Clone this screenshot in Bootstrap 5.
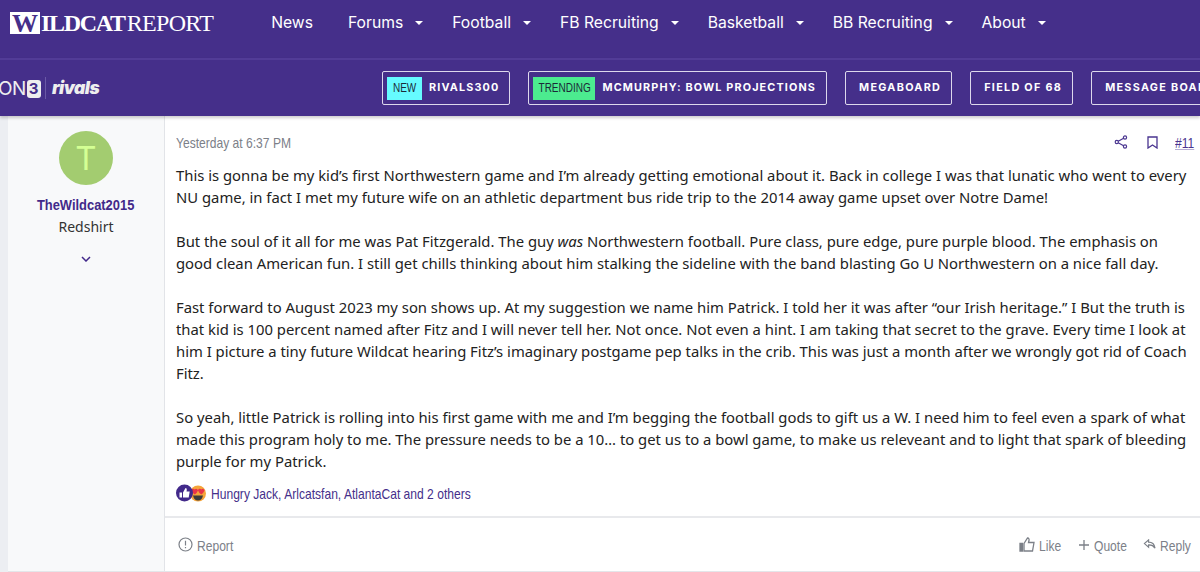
<!DOCTYPE html>
<html lang="en">
<head>
  <meta charset="UTF-8" />
  <meta name="viewport" content="width=device-width, initial-scale=1.0"/>
  <title>Wildcat Report</title>
  <link href="https://cdn.jsdelivr.net/npm/bootstrap@5.3.0/dist/css/bootstrap.min.css" rel="stylesheet"/>
  <style>
    html, body { height: 572px; overflow: hidden; }
    body { background: #eceef2; font-family: "Noto Sans", "Open Sans", sans-serif; color: #222; }

    /* no narrow font installed, so squeeze Liberation Sans */
    .squeeze { display: inline-block; font-family: "Liberation Sans", sans-serif; font-size: 15px; line-height: 20px; white-space: nowrap; transform: scaleX(.805); transform-origin: left center; }
    .box-date { width: 115px; }
    .box-num { width: 20px; }
    .box-react { width: 259px; }
    .box-report { width: 37px; }
    .box-like { width: 24px; }
    .box-quote { width: 34px; }
    .box-reply { width: 31px; }

    .top-bar { background: #452f8a; height: 58px; padding: 0 0 12px 10px; }
    .brand-box { width: 30px; height: 22px; background: #fff; color: #452f8a; font: 700 26px/23px "Liberation Serif", serif; text-align: center; }
    .brand-text { font: 700 24px/24px "Liberation Serif", serif; color: #fff; letter-spacing: -1.3px; margin-left: 1px; }
    .brand-text span { font-weight: 400; letter-spacing: -.7px; margin-left: 2px; }
    .main-link { color: #fff; font: 400 15.7px/20px "Inter", "Liberation Sans", sans-serif; text-decoration: none; }
    .main-links { margin-left: 58px; gap: 29px; }
    .main-links .link-first { margin-right: 6px; }
    .caret-down { display: inline-block; width: 0; height: 0; border: 4px solid transparent; border-top: 4px solid #fff; border-bottom: 0; margin-left: 12px; vertical-align: 3px; }

    .sub-bar { background: #452f8a; border-top: 2px solid #523c97; height: 58px; box-shadow: 0 2px 3px rgba(0,0,0,.2); position: relative; white-space: nowrap; }
    .on3 { font: 400 19px/1 "Inter", "Liberation Sans", sans-serif; color: #eee; margin-left: -2px; letter-spacing: -.5px; width: 46px; }
    .on3 b { display: inline-block; background: #eee; color: #452f8a; border-radius: 3px; font-size: 15px; line-height: 18px; padding: 0 2px; margin-left: 1px; vertical-align: 1px; letter-spacing: 0; }
    .logo-split { width: 1px; height: 22px; background: #6a58a6; margin: 0 6px 0 1px; }
    .rivals { font: italic 900 17.500px/1 "Inter", "Liberation Sans", sans-serif; color: #eee; letter-spacing: -.5px; width: 330px; }
    .promo-row { gap: 18px; }
    .promo { height: 34px; border: 1px solid #ddd8ec; border-radius: 2px; color: #fff; font: 700 10.800px/1 "Inter", "Liberation Sans", sans-serif; letter-spacing: 1.150px; padding: 0 10px 0 4px; flex-shrink: 0; text-decoration: none; }
    .promo.plain { padding: 0 10px 0 13px; letter-spacing: 1.300px; }
    .promo-tag { height: 23px; display: flex; align-items: center; justify-content: center; margin-right: 7px; flex-shrink: 0; }
    .promo-tag span { font: 400 12.500px/1 "Liberation Sans", sans-serif; letter-spacing: 0; color: #1b2a38; transform: scaleX(.8); }
    .tag-new { background: #66fbff; width: 35px; }
    .tag-trending { background: #4ceb8f; width: 62px; }

    .post-wrap { margin-left: 8px; height: 456px; background: #fff; border-bottom: 1px solid #e4e6ea; }
    .user-cell { width: 157px; background: #f8f9fa; border-right: 1px solid #e2e4e8; flex-shrink: 0; padding-top: 15px; }
    .avatar-t { width: 54px; height: 54px; border-radius: 50%; background: #a3cc70; color: #d4ff94; font: 400 33px/54px "Inter", "Liberation Sans", sans-serif; text-align: center; }
    .user-name { color: #42298a; font-weight: 700; margin-top: 10px; transform-origin: center; transform: scaleX(.86); }
    .user-title { font-size: 14px; line-height: 20px; margin-top: 2px; color: #333; }
    .user-more { margin-top: 19px; }
    .post-date { color: #7c8088; }
    .post-head { padding: 14px 5px 0 11px; }
    .post-tools { gap: 19px; }
    .post-tools .box-num { margin-left: -2px; }
    .post-num { color: #4a3590; text-decoration: underline; text-decoration-color: #b7aed4; }
    .post-text { padding: 0 11px; margin-top: 10px; font-size: 14.84px; line-height: 22px; color: #222; }
    .post-text p { margin: 0 0 22px; }
    .post-text p:last-child { margin: 0; }
    .react-row { padding: 0 11px; margin-top: 9px; height: 24px; }
    .react-names { color: #452f8a; margin-left: 5px; }
    .post-foot { border-top: 2px solid #e8e9ec; margin-top: 11px; padding: 0 9px 0 13px; flex-grow: 1; color: #7c8088; }
    .foot-link { gap: 4px; }
    .foot-tools { gap: 15px; }
  </style>
</head>
<body>
  <div class="top-bar d-flex align-items-center">
    <div class="d-flex align-items-center">
      <div class="brand-box">W</div>
      <div class="brand-text">ILDCAT<span>REPORT</span></div>
    </div>
    <nav class="main-links d-flex">
      <a class="main-link link-first" href="#">News</a>
      <a class="main-link" href="#">Forums<i class="caret-down"></i></a>
      <a class="main-link" href="#">Football<i class="caret-down"></i></a>
      <a class="main-link" href="#">FB Recruiting<i class="caret-down"></i></a>
      <a class="main-link" href="#">Basketball<i class="caret-down"></i></a>
      <a class="main-link" href="#">BB Recruiting<i class="caret-down"></i></a>
      <a class="main-link" href="#">About<i class="caret-down"></i></a>
    </nav>
  </div>

  <div class="sub-bar d-flex align-items-center overflow-hidden">
    <div class="on3 flex-shrink-0">ON<b>3</b></div>
    <div class="logo-split flex-shrink-0"></div>
    <div class="rivals flex-shrink-0">rivals</div>
    <div class="promo-row d-flex">
      <a class="promo d-flex align-items-center" href="#"><span class="promo-tag tag-new"><span>NEW</span></span>RIVALS300</a>
      <a class="promo d-flex align-items-center" href="#"><span class="promo-tag tag-trending"><span>TRENDING</span></span>MCMURPHY: BOWL PROJECTIONS</a>
      <a class="promo plain d-flex align-items-center" href="#">MEGABOARD</a>
      <a class="promo plain d-flex align-items-center" href="#">FIELD OF 68</a>
      <a class="promo plain d-flex align-items-center" href="#">MESSAGE BOARD</a>
    </div>
  </div>

  <div class="post-wrap d-flex">
    <div class="user-cell d-flex flex-column align-items-center">
      <div class="avatar-t">T</div>
      <div class="user-name squeeze">TheWildcat2015</div>
      <div class="user-title">Redshirt</div>
      <svg class="user-more" width="10" height="6" viewBox="0 0 10 6" fill="none" stroke="#42298a" stroke-width="1.500"><path d="M1 1l4 4 4-4"/></svg>
    </div>

    <div class="flex-grow-1 d-flex flex-column">
      <div class="post-head d-flex justify-content-between">
        <div class="box-date"><span class="post-date squeeze">Yesterday at 6:37 PM</span></div>
        <div class="post-tools d-flex align-items-center">
          <svg width="14" height="14" viewBox="0 0 14 14" fill="none" stroke="#4a3590" stroke-width="1.200"><circle cx="11" cy="2.500" r="1.600"/><circle cx="2.800" cy="7" r="1.600"/><circle cx="11" cy="11.500" r="1.600"/><path d="M4.200 6.200l5.400-3M4.200 7.800l5.400 3"/></svg>
          <svg width="11" height="13" viewBox="0 0 11 13" fill="none" stroke="#4a3590" stroke-width="1.300"><path d="M1 1h9v11L5.500 9 1 12z"/></svg>
          <div class="box-num"><span class="post-num squeeze">#11</span></div>
        </div>
      </div>
      <div class="post-text">
        <p>This is gonna be my kid’s first Northwestern game and I’m already getting emotional about it. Back in college I was that lunatic who went to every NU game, in fact I met my future wife on an athletic department bus ride trip to the 2014 away game upset over Notre Dame!</p>
        <p>But the soul of it all for me was Pat Fitzgerald. The guy <em>was</em> Northwestern football. Pure class, pure edge, pure purple blood. The emphasis on good clean American fun. I still get chills thinking about him stalking the sideline with the band blasting Go U Northwestern on a nice fall day.</p>
        <p>Fast forward to August 2023 my son shows up. At my suggestion we name him Patrick. I told her it was after “our Irish heritage.” I But the truth is that kid is 100 percent named after Fitz and I will never tell her. Not once. Not even a hint. I am taking that secret to the grave. Every time I look at him I picture a tiny future Wildcat hearing Fitz’s imaginary postgame pep talks in the crib. This was just a month after we wrongly got rid of Coach Fitz.</p>
        <p>So yeah, little Patrick is rolling into his first game with me and I’m begging the football gods to gift us a W. I need him to feel even a spark of what made this program holy to me. The pressure needs to be a 10… to get us to a bowl game, to make us releveant and to light that spark of bleeding purple for my Patrick.</p>
      </div>
      <div class="react-row d-flex align-items-center">
        <svg width="30" height="19" viewBox="0 0 30 19">
          <circle cx="22" cy="9.500" r="8" fill="#f5a43a"/>
          <path d="M15.500 6.500a1.900 1.900 0 0 1 3.300-1.100A1.900 1.900 0 0 1 22 6.500Q21 9 18.800 10.500Q16.500 9 15.500 6.500zM22 6.500a1.900 1.900 0 0 1 3.300-1.100A1.900 1.900 0 0 1 28.500 6.500Q27.500 9 25.300 10.500Q23 9 22 6.500z" fill="#e8344a"/>
          <path d="M17 11.500h10q-1 5-5 5t-5-5z" fill="#3b3b3b"/>
          <circle cx="8.500" cy="9" r="8.500" fill="#42298a"/>
          <path d="M3.500 8.500h2.500v5H3.500zM7 8.500l2.500-4.500q1.500 0 1.300 2L10.500 7.500h3.200l-1 6H7z" fill="#fff"/>
        </svg>
        <div class="react-names box-react"><span class="squeeze">Hungry Jack, Arlcatsfan, AtlantaCat and 2 others</span></div>
      </div>
      <div class="post-foot d-flex justify-content-between align-items-center">
        <div class="foot-link d-flex align-items-center">
          <svg width="15" height="15" viewBox="0 0 15 15" fill="none" stroke="#7c8088" stroke-width="1.200"><circle cx="7.500" cy="7.500" r="6.500"/><path d="M7.500 3.800v4.600M7.500 10v1.200"/></svg>
          <div class="box-report"><span class="squeeze">Report</span></div>
        </div>
        <div class="foot-tools d-flex align-items-center">
          <div class="foot-link d-flex align-items-center">
            <svg width="16" height="15" viewBox="0 0 16 15" fill="none" stroke="#7c8088" stroke-width="1.300"><path d="M1 6.500h2.500V14H1z" fill="#7c8088"/><path d="M5 6.500L8.500 1q2 .3 1.500 2.500L9.500 5.500H15l-1.500 8.500H5z"/></svg>
            <div class="box-like"><span class="squeeze">Like</span></div>
          </div>
          <div class="foot-link d-flex align-items-center">
            <svg width="12" height="12" viewBox="0 0 12 12" fill="none" stroke="#7c8088" stroke-width="1.300"><path d="M6 1v10M1 6h10"/></svg>
            <div class="box-quote"><span class="squeeze">Quote</span></div>
          </div>
          <div class="foot-link d-flex align-items-center">
            <svg width="13" height="11" viewBox="0 0 14 12" fill="none" stroke="#7c8088" stroke-width="1.300"><path d="M6 1L1.500 5 6 9V6.500q4.500-.3 7 3.500q-1-6.500-7-6.500z"/></svg>
            <div class="box-reply"><span class="squeeze">Reply</span></div>
          </div>
        </div>
      </div>
    </div>
  </div>
  <script src="https://cdn.jsdelivr.net/npm/bootstrap@5.3.0/dist/js/bootstrap.bundle.min.js"></script>
</body>
</html>
